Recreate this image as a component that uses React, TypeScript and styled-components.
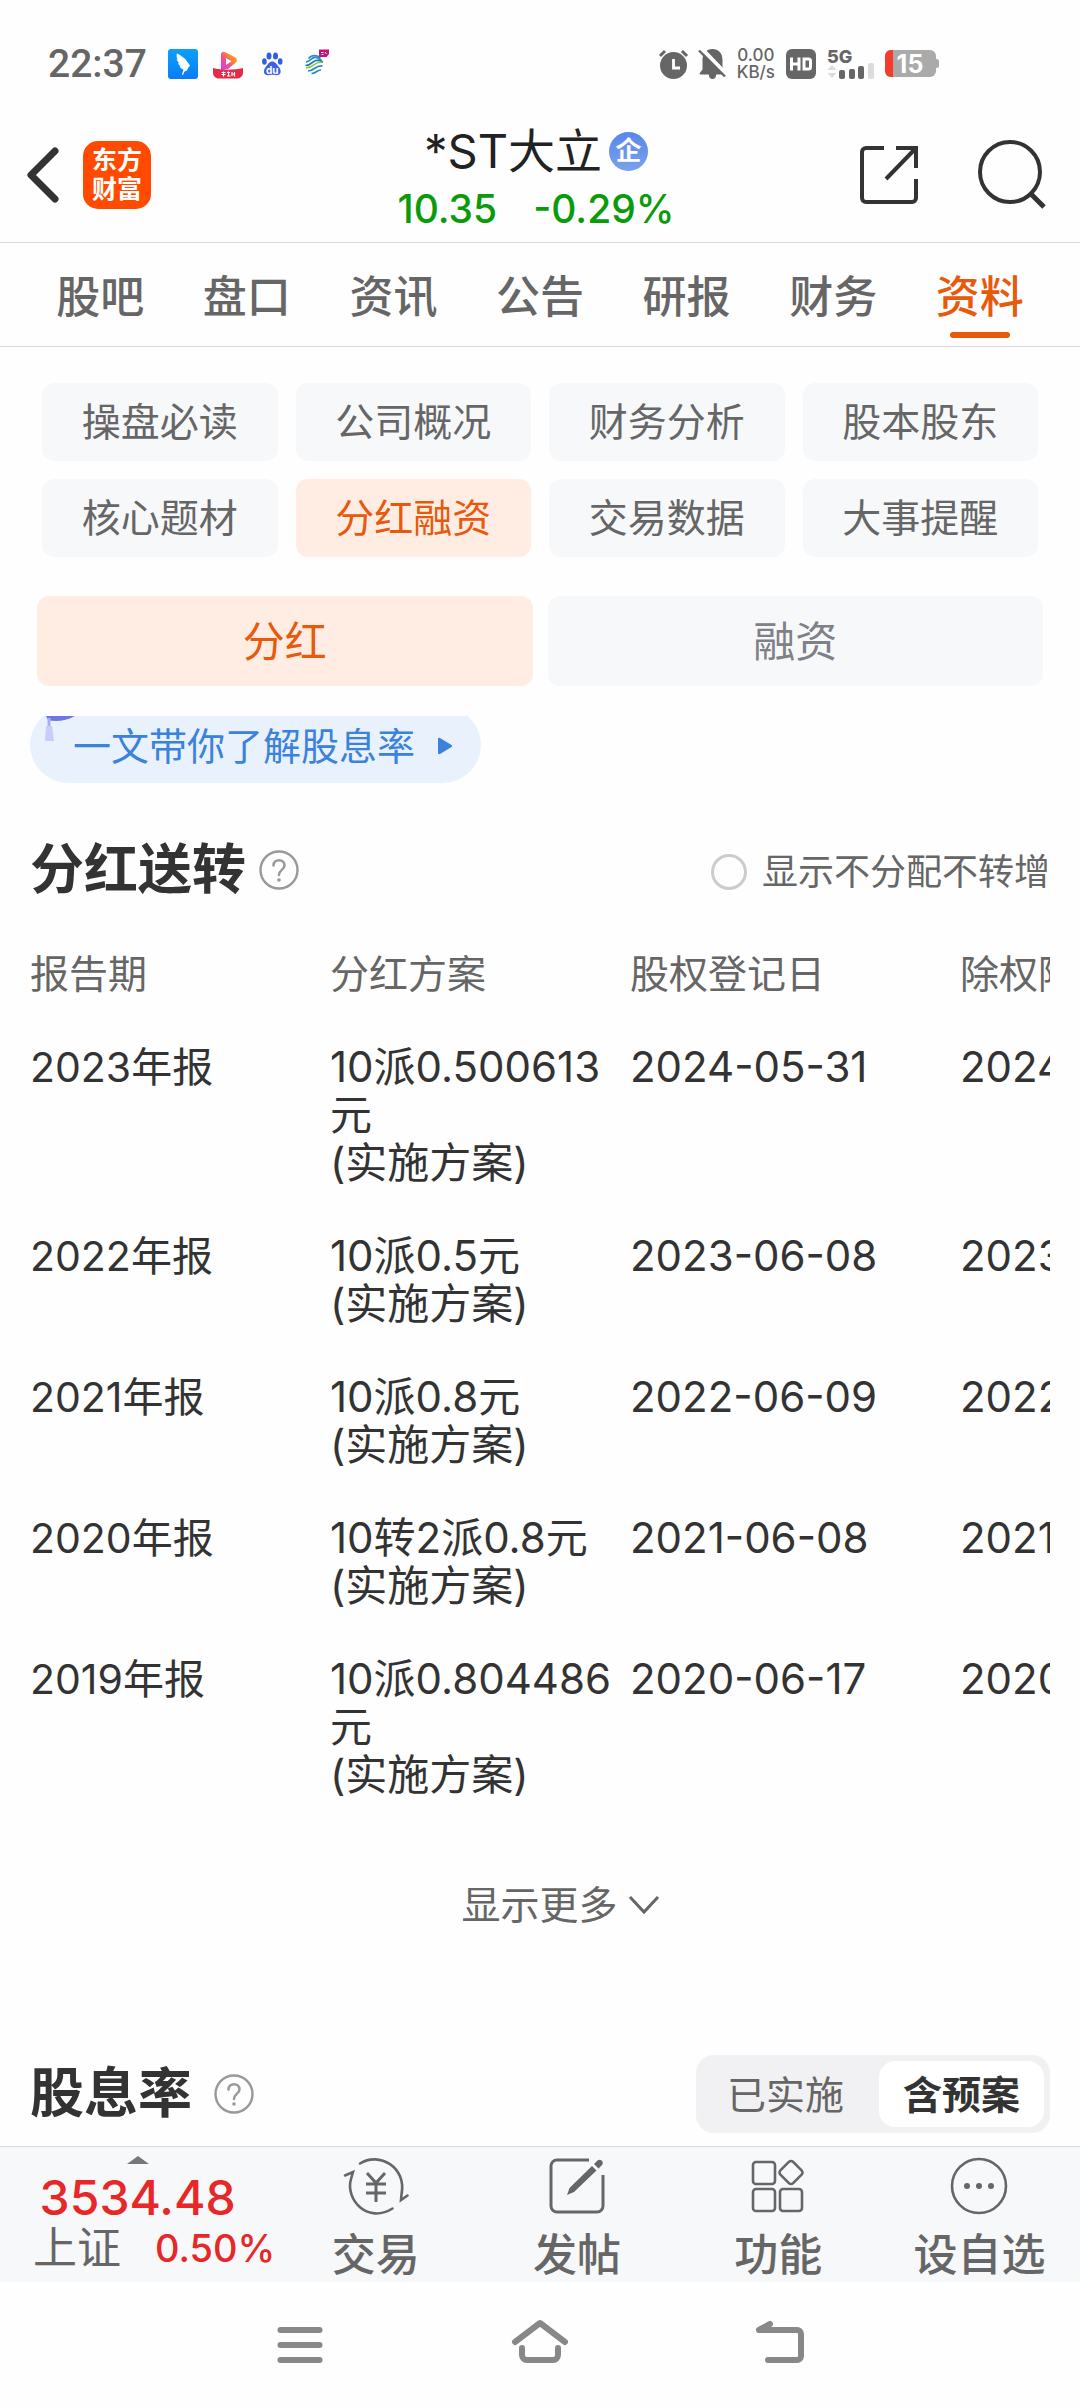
import React, { useState } from "react";
import styled, { createGlobalStyle } from "styled-components";

const color = {
  ink: "#333333",
  text: "#666666",
  muted: "#808087",
  line: "#d9d9db",
  orange: "#e8590c",
  orangeSoft: "#ffede4",
  chip: "#f7f8fa",
  green: "#0a9b0a",
  red: "#e62828",
  blue: "#3a82dc",
};

const GlobalStyle = createGlobalStyle`
  *, *::before, *::after { box-sizing: border-box; }
  body {
    margin: 0;
    background: #fefefe;
    color: ${color.ink};
    font-family: Inter, "Noto Sans CJK SC", sans-serif;
  }
  button {
    margin: 0;
    padding: 0;
    border: 0;
    background: none;
    color: inherit;
    font: inherit;
    cursor: pointer;
  }
  svg { display: block; flex: none; overflow: visible; }
`;

const Page = styled.div`
  display: flex;
  flex-direction: column;
  min-height: 100vh;
  overflow: hidden;
`;

/* ---------- status bar ---------- */

const StatusBar = styled.div`
  display: flex;
  align-items: center;
  justify-content: space-between;
  height: 108px;
  padding: 19px 141px 0 48px;
  color: ${color.text};
`;

const StatusGroup = styled.div<{ $gap: number }>`
  display: flex;
  align-items: center;
  gap: ${(p) => p.$gap}px;
`;

const Clock = styled.span`
  margin-right: 6px;
  font: 500 39px/48px Roboto, sans-serif;
`;

const Speed = styled.span`
  display: flex;
  flex-direction: column;
  align-items: center;
  font: 500 17px/17px Inter, sans-serif;
`;

/* ---------- stock header ---------- */

const Header = styled.header`
  display: grid;
  grid-template-columns: 1fr auto 1fr;
  align-items: center;
  height: 135px;
  padding: 0 34px 0 26px;
  border-bottom: 1px solid ${color.line};
`;

const HeaderSide = styled.div<{ $end?: boolean }>`
  display: flex;
  align-items: center;
  justify-content: ${(p) => (p.$end ? "flex-end" : "flex-start")};
  gap: ${(p) => (p.$end ? 60 : 24)}px;
`;

const Logo = styled.a`
  display: flex;
  flex-direction: column;
  justify-content: center;
  width: 68px;
  height: 68px;
  border-radius: 15px;
  background: #ff4a00;
  color: #fff;
  font-size: 25px;
  font-weight: 700;
  line-height: 29px;
  text-align: center;
  text-decoration: none;
`;

const Stock = styled.div`
  display: flex;
  flex-direction: column;
  align-items: center;
  padding-top: 8px;
`;

const StockName = styled.h1`
  display: flex;
  align-items: center;
  gap: 7px;
  margin: 0;
  color: #222;
  font-size: 47px;
  font-weight: 400;
  line-height: 60px;
`;

const Badge = styled.span`
  width: 39px;
  height: 39px;
  border-radius: 50%;
  background: linear-gradient(#5a86ea, #78a2ee);
  color: #fff;
  font-size: 26px;
  font-weight: 700;
  line-height: 38px;
  text-align: center;
`;

const Price = styled.div`
  display: flex;
  gap: 36px;
  color: ${color.green};
  font-size: 39px;
  font-weight: 500;
  line-height: 56px;
`;

/* ---------- tabs ---------- */

const Tabs = styled.nav`
  display: flex;
  height: 104px;
  padding: 0 27px;
  border-bottom: 1px solid ${color.line};
`;

const Tab = styled.button<{ $on: boolean }>`
  position: relative;
  flex: 1;
  padding-top: 4px;
  color: ${(p) => (p.$on ? color.orange : color.text)};
  font-size: 44px;
  font-weight: 500;
  line-height: 60px;

  &::after {
    content: "";
    display: ${(p) => (p.$on ? "block" : "none")};
    position: absolute;
    bottom: 8px;
    left: 50%;
    width: 60px;
    height: 6px;
    margin-left: -30px;
    border-radius: 3px;
    background: ${color.orange};
  }
`;

const Chips = styled.div`
  display: grid;
  grid-template-columns: repeat(4, 1fr);
  gap: 18px;
  padding: 36px 42px 39px;
`;

const Chip = styled.button<{ $on: boolean }>`
  height: 78px;
  padding-bottom: 6px;
  border-radius: 12px;
  background: ${(p) => (p.$on ? color.orangeSoft : color.chip)};
  color: ${(p) => (p.$on ? color.orange : color.text)};
  font-size: 39px;
`;

const Segments = styled.div`
  display: grid;
  grid-template-columns: 1fr 1fr;
  gap: 15px;
  padding: 0 37px;
`;

const Segment = styled.button<{ $on: boolean }>`
  height: 90px;
  padding-bottom: 6px;
  border-radius: 12px;
  background: ${(p) => (p.$on ? color.orangeSoft : color.chip)};
  color: ${(p) => (p.$on ? color.orange : color.muted)};
  font-size: 42px;
`;

/* ---------- content ---------- */

const Content = styled.main`
  flex: 1;
  padding: 30px 30px 13px;
`;

const PromoClip = styled.div`
  display: flex;
  align-items: flex-end;
  height: 67px;
  overflow: hidden;
`;

const Promo = styled.a`
  position: relative;
  display: flex;
  align-items: center;
  gap: 22px;
  height: 76px;
  padding: 2px 28px 0 43px;
  border-radius: 38px;
  background: #e9f2fc;
  color: ${color.blue};
  font-size: 38px;
  line-height: 48px;
  text-decoration: none;
`;

const Tassel = styled.svg`
  position: absolute;
  top: 9px;
  left: 14px;
`;

const SectionHead = styled.div<{ $top: number; $height: number }>`
  display: flex;
  align-items: center;
  justify-content: space-between;
  height: ${(p) => p.$height}px;
  margin-top: ${(p) => p.$top}px;
`;

const Heading = styled.div<{ $gap: number }>`
  display: flex;
  align-items: center;
  gap: ${(p) => p.$gap}px;

  h2 {
    margin: 0;
    font-size: 54px;
    font-weight: 700;
    line-height: 60px;
  }
`;

const RadioLabel = styled.label`
  display: flex;
  align-items: center;
  gap: 15px;
  padding-top: 4px;
  color: ${color.text};
  font-size: 36px;
  line-height: 48px;
`;

const Radio = styled.input`
  appearance: none;
  width: 36px;
  height: 36px;
  margin: 0;
  border: 3px solid #cccccc;
  border-radius: 50%;
  &:checked { border: 10px solid ${color.orange}; }
`;

const TableScroll = styled.div`
  margin-top: 50px;
  overflow-x: auto;
  scrollbar-width: none;
`;

const Table = styled.table`
  width: 1230px;
  table-layout: fixed;
  border-collapse: collapse;

  col:nth-child(-n + 2) { width: 300px; }
  col:nth-child(3) { width: 330px; }

  th, td {
    padding: 0 0 45px;
    text-align: left;
    vertical-align: top;
    line-height: 48px;
    font-weight: 400;
  }
  thead th { color: ${color.text}; font-size: 39px; }
  tbody th { font-size: 41px; }
  tbody td { font-size: 42px; }
`;

const Plan = styled.div`
  margin-right: 8px;
  word-break: break-all;
`;

const More = styled.button`
  display: flex;
  align-items: center;
  justify-content: center;
  gap: 11px;
  width: 100%;
  margin-top: 37px;
  padding-left: 40px;
  color: ${color.text};
  font-size: 39px;
  line-height: 48px;
`;

const Toggle = styled.div`
  display: grid;
  grid-template-columns: 1fr 165px;
  gap: 10px;
  width: 354px;
  height: 78px;
  padding: 6px;
  border-radius: 18px;
  background: #f1f1f3;
`;

const ToggleOption = styled.button<{ $on: boolean }>`
  padding-bottom: 4px;
  border-radius: 16px;
  background: ${(p) => (p.$on ? "#fff" : "transparent")};
  color: ${(p) => (p.$on ? color.ink : color.text)};
  font-size: 39px;
  font-weight: ${(p) => (p.$on ? 700 : 400)};
`;

/* ---------- bottom bars ---------- */

const ActionBar = styled.footer`
  display: grid;
  grid-template-columns: 275fr repeat(4, 201fr);
  height: 136px;
  border-top: 1px solid ${color.line};
  background: #f7f8fa;
`;

const Quote = styled.button`
  display: flex;
  flex-direction: column;
  align-items: center;
  padding-top: 9px;
`;

const IndexValue = styled.span`
  margin-top: 7px;
  color: ${color.red};
  font-size: 48px;
  font-weight: 500;
  line-height: 54px;
`;

const IndexRow = styled.span`
  display: flex;
  align-self: flex-end;
  align-items: center;
  gap: 34px;
  line-height: 46px;
`;

const IndexName = styled.span`
  color: ${color.text};
  font-size: 44px;
`;

const IndexChange = styled.span`
  color: ${color.red};
  font-size: 38px;
  font-weight: 500;
`;

const Action = styled.button`
  display: flex;
  flex-direction: column;
  align-items: center;
  gap: 16px;
  padding-top: 10px;
  color: ${color.text};
  font-size: 44px;
  font-weight: 500;
  line-height: 48px;
`;

const SystemNav = styled.nav`
  display: flex;
  justify-content: center;
  height: 126px;
`;

const SystemButton = styled.button`
  display: flex;
  align-items: center;
  justify-content: center;
  width: 240px;
`;

/* ---------- drawings ---------- */

const WingIcon = () => (
  <svg width="30" height="30" viewBox="0 0 30 30">
    <defs>
      <linearGradient id="wing" x2="0" y2="1">
        <stop stopColor="#0aa0fb" />
        <stop offset="1" stopColor="#0a7cf8" />
      </linearGradient>
    </defs>
    <rect width="30" height="30" rx="3" fill="url(#wing)" />
    <path
      d="M9 4.500c1 .2 6.500 3.500 9 6.500 1.500 2 2.500 3.500 4 5.500l-2 2.500-1 2.500-2.500 1-1.500 3.500-1-.5 1.500-5-1.500-.5c-1.500-1-2-2-2.500-3l1.500.3c-2-1.300-2.500-2-3-3.300l1.500.5C9.500 12.500 9 11.500 8.500 10l1.200.6C8.500 8.500 8.300 6.500 9 4.500z"
      fill="#fff"
    />
  </svg>
);

const VideoIcon = () => (
  <svg width="30" height="30" viewBox="0 0 30 30">
    <defs>
      <linearGradient id="play" x1="0" y1="1" x2="1" y2="0">
        <stop stopColor="#d936f5" />
        <stop offset="0.400" stopColor="#f0508c" />
        <stop offset="0.650" stopColor="#f98a2b" />
        <stop offset="1" stopColor="#fbb030" />
      </linearGradient>
    </defs>
    <path d="M8 5.500C8 3 10 2 12.500 3.200l9.500 5c2.500 1.500 2.500 4 .5 5.500L15 20l-7 1z" fill="url(#play)" />
    <path d="M13 9l5.500 3.200L13 16z" fill="#fff" />
    <path d="M0 19c9 2.300 21 2.300 30 0v4.500c0 3.500-2.500 6-6 6H6c-3.500 0-6-2.500-6-6z" fill="#e52a45" />
    <path d="M8.500 23.500h4M8.500 25.500h4M10.500 22.500v5M14 23.500h3M14 27h3.500M15.500 22.500v4M19 23v4M21.500 23v4.500M19 25h2.500" stroke="#fff" strokeWidth="1.200" />
  </svg>
);

const PawIcon = () => (
  <svg width="28" height="24" viewBox="-4 0 28 24" fill="#2f5fe0">
    <ellipse cx="7" cy="4" rx="2.500" ry="3.500" />
    <ellipse cx="13.500" cy="4" rx="2.500" ry="3.500" />
    <ellipse cx="2.400" cy="9.500" rx="2.300" ry="3.200" />
    <ellipse cx="18.200" cy="9.500" rx="2.300" ry="3.200" />
    <path d="M10.300 9.500c3 0 4 2.500 6 4.700 3 3 4 9-2 9-2 0-2.500-.4-4-.4s-2 .4-4 .4c-6 0-5-6-2-9 2-2.200 3-4.700 6-4.700z" fill="#3c62e4" />
    <text x="10.300" y="21.500" fontFamily="Inter, sans-serif" fontSize="10" fontWeight="700" fill="#fff" textAnchor="middle">du</text>
  </svg>
);

const CarrierIcon = () => (
  <svg width="30" height="30" viewBox="-4 0 30 30" fill="none">
    <path d="M14 0.500h10v4.500l-2.500 3H14z" fill="#c8107a" />
    <path d="M16 3.500h2.500M16.500 5.500h2M20 3l1.500 2" stroke="#fff" strokeWidth="0.900" />
    <g strokeWidth="1.700">
      <path d="M3.500 9.500c3.500-4 9-4 12 0M1 13c5-.5 5.500-5.500 10-4.500 3 .7 3.500 2.500 6 3" stroke="#2a8ac6" />
      <path d="M0.500 16.500c8 0 6.500-8.500 17.500-3.500" stroke="#1d79bd" />
      <path d="M1 19c8.500 0 8-7.500 17-5.500" stroke="#8fc63f" />
      <path d="M3 22c6.500 0 7-6 14.500-5M6.500 24.500c4.500 0 5-3.500 9.500-3.500" stroke="#2a8ac6" />
    </g>
  </svg>
);

const AlarmIcon = () => (
  <svg width="29" height="30" viewBox="0 0 29 30">
    <circle cx="14.500" cy="16.500" r="13.500" fill="#666" />
    <path d="M1 7l5-5M28 7l-5-5" stroke="#666" strokeWidth="3" />
    <path d="M14.500 10v9h6.500" stroke="#fff" strokeWidth="2.800" fill="none" />
  </svg>
);

const MutedBellIcon = () => (
  <svg width="27" height="30" viewBox="0 0 27 30">
    <path d="M1.500 25.500c-1 0-1.200-1-.5-1.700l2.500-3.300V11C3.500 4 7.500 0 13.500 0s10 4 10 11v9.500l2.500 3.300c.7.700.5 1.700-.5 1.700h-8.300c0 6-7.400 6-7.400 0z" fill="#666" />
    <path d="M2.500-.5l25 26" stroke="#fefefe" strokeWidth="4" />
    <path d="M0 1.500l26 26" stroke="#666" strokeWidth="2.400" />
  </svg>
);

const HdIcon = () => (
  <svg width="30" height="30" viewBox="0 0 30 30">
    <rect width="30" height="30" rx="6" fill="#666" />
    <path d="M5.500 8.500v13M13 8.500v13M5.500 15H13M18 10h4.500a2 2 0 0 1 2 2v6a2 2 0 0 1-2 2H18z" stroke="#fff" strokeWidth="3" fill="none" />
  </svg>
);

const SignalIcon = () => (
  <svg width="47" height="30" viewBox="0 0 47 30" fill="#666">
    <text x="0" y="14" fontFamily="Inter, sans-serif" fontSize="18" fontWeight="800">5G</text>
    <path d="M0.500 21l4.500-5 4.500 5zM0.500 24l4.500 5 4.500-5z" fill="#dcdcdc" />
    <rect x="12" y="21" width="6" height="9" rx="2" />
    <rect x="22" y="20" width="6" height="10" rx="2" />
    <rect x="31" y="17" width="6" height="13" rx="2" />
    <rect x="41" y="14" width="6" height="16" rx="2" fill="#dcdcdc" />
  </svg>
);

const BatteryIcon = () => (
  <svg width="54" height="27" viewBox="0 0 54 27">
    <rect width="51" height="27" rx="6" fill="#aaaaaa" />
    <path d="M6 0h2v27H6a6 6 0 0 1-6-6V6a6 6 0 0 1 6-6z" fill="#f63a2c" />
    <path d="M50 9h1.500a2.500 2.500 0 0 1 2.500 2.500v4a2.500 2.500 0 0 1-2.500 2.500H50z" fill="#aaaaaa" />
    <text x="25" y="22.500" fontFamily="Inter, sans-serif" fontSize="25" fontWeight="700" fill="#fff" textAnchor="middle">15</text>
  </svg>
);

const BackIcon = () => (
  <svg width="33" height="58" viewBox="0 0 33 58" fill="none" stroke="#333" strokeWidth="7" strokeLinecap="round" strokeLinejoin="round">
    <path d="M29 5L5 29l24 24" />
  </svg>
);

const ShareIcon = () => (
  <svg width="58" height="58" viewBox="0 0 58 58" fill="none" stroke="#333" strokeWidth="4">
    <path d="M24 2H6a4 4 0 0 0-4 4v46a4 4 0 0 0 4 4h46a4 4 0 0 0 4-4V33" />
    <path d="M36 2h20v20M56 2L26 33" />
  </svg>
);

const SearchIcon = () => (
  <svg width="68" height="70" viewBox="0 0 68 70" fill="none" stroke="#333" strokeWidth="4">
    <circle cx="32" cy="32" r="30" />
    <path d="M52 53l14 14" strokeWidth="5" />
  </svg>
);

const HelpIcon = () => (
  <svg width="40" height="40" viewBox="0 0 40 40" fill="none" stroke="#999" strokeWidth="2.400">
    <circle cx="20" cy="20" r="18.500" />
    <path d="M14.500 15.500c0-7 11-7 11 0 0 4-5.500 4.500-5.500 9.500" strokeWidth="2.500" strokeLinecap="round" />
    <circle cx="20" cy="30" r="1.800" fill="#999" stroke="none" />
  </svg>
);

const ChevronDown = () => (
  <svg width="30" height="20" viewBox="0 0 30 20" fill="none" stroke="#666" strokeWidth="3">
    <path d="M1 2l14 15L29 2" />
  </svg>
);

const TradeIcon = () => (
  <svg width="66" height="58" viewBox="0 0 66 58" fill="none" stroke="#666" strokeWidth="2.600" strokeLinecap="round">
    <path d="M17 6.500C36-5.500 64 10 58.500 37.500L58 43l6.500-4.500" />
    <path d="M2 18.500l8-3.500-2 7C2 43 25 67 49.500 51.500" />
    <path d="M24 16l9 10 9-10M23 27h20M23 36h20M33 27v18" strokeWidth="3" strokeLinecap="butt" />
  </svg>
);

const PostIcon = () => (
  <svg width="56" height="58" viewBox="0 0 56 58" fill="none" stroke="#666" strokeWidth="3">
    <path d="M40 3H8a6 6 0 0 0-6 6v40a6 6 0 0 0 6 6h40a6 6 0 0 0 6-6V18" />
    <path d="M18 38l2.500-7L43 9l4.500 4.500L25 35zM45 7l3.500-3.500c3-2.500 7 1.500 4.500 4.500L49.500 11.500z" fill="#666" stroke="none" />
  </svg>
);

const GridIcon = () => (
  <svg width="54" height="58" viewBox="0 0 54 58" fill="none" stroke="#666" strokeWidth="2.600">
    <rect x="2" y="5" width="22" height="22" rx="3" />
    <rect x="2" y="32" width="22" height="22" rx="3" />
    <rect x="29" y="32" width="22" height="22" rx="3" />
    <rect x="31" y="6.500" width="18" height="18" rx="3" transform="rotate(45 40 15.500)" />
  </svg>
);

const DotsIcon = () => (
  <svg width="58" height="58" viewBox="0 0 58 58" fill="#666">
    <circle cx="29" cy="29" r="27" fill="none" stroke="#666" strokeWidth="2.600" />
    <circle cx="17" cy="29" r="3" />
    <circle cx="29" cy="29" r="3" />
    <circle cx="41" cy="29" r="3" />
  </svg>
);

const MenuIcon = () => (
  <svg width="46" height="44" viewBox="0 0 46 44" stroke="#888" strokeWidth="6" strokeLinecap="round">
    <path d="M3.500 7h39M3.500 22h39M3.500 37h39" />
  </svg>
);

const HomeIcon = () => (
  <svg width="58" height="48" viewBox="0 0 58 48" fill="none" stroke="#888" strokeWidth="6" strokeLinecap="round" strokeLinejoin="round">
    <path d="M4 21L29 2l25 19M11 27v7a5 5 0 0 0 5 5h26a5 5 0 0 0 5-5v-7" />
  </svg>
);

const ReturnIcon = () => (
  <svg width="50" height="48" viewBox="0 0 50 48" fill="none" stroke="#888" strokeWidth="6" strokeLinecap="round" strokeLinejoin="round">
    <path d="M15 3L4 9h38a4 4 0 0 1 4 4v22a4 4 0 0 1-4 4H13" />
  </svg>
);

/* ---------- data ---------- */

const tabs = ["股吧", "盘口", "资讯", "公告", "研报", "财务", "资料"];
const chips = ["操盘必读", "公司概况", "财务分析", "股本股东", "核心题材", "分红融资", "交易数据", "大事提醒"];
const rows = [
  ["2023年报", "10派0.500613元", "2024-05-31", "2024-06-03"],
  ["2022年报", "10派0.5元", "2023-06-08", "2023-06-09"],
  ["2021年报", "10派0.8元", "2022-06-09", "2022-06-10"],
  ["2020年报", "10转2派0.8元", "2021-06-08", "2021-06-09"],
  ["2019年报", "10派0.804486元", "2020-06-17", "2020-06-18"],
];
const actions = [
  { label: "交易", icon: <TradeIcon /> },
  { label: "发帖", icon: <PostIcon /> },
  { label: "功能", icon: <GridIcon /> },
  { label: "设自选", icon: <DotsIcon /> },
];

export default function App() {
  const [tab, setTab] = useState("资料");
  const [chip, setChip] = useState("分红融资");
  const [segment, setSegment] = useState("分红");
  const [scope, setScope] = useState("含预案");

  return (
    <Page>
      <GlobalStyle />
      <StatusBar>
        <StatusGroup $gap={15}>
          <Clock>22:37</Clock>
          <WingIcon />
          <VideoIcon />
          <PawIcon />
          <CarrierIcon />
        </StatusGroup>
        <StatusGroup $gap={11}>
          <AlarmIcon />
          <MutedBellIcon />
          <Speed>
            <span>0.00</span>
            <span>KB/s</span>
          </Speed>
          <HdIcon />
          <SignalIcon />
          <BatteryIcon />
        </StatusGroup>
      </StatusBar>

      <Header>
        <HeaderSide>
          <button aria-label="返回"><BackIcon /></button>
          <Logo href="#">
            <span>东方</span>
            <span>财富</span>
          </Logo>
        </HeaderSide>
        <Stock>
          <StockName>
            *ST大立<Badge>企</Badge>
          </StockName>
          <Price>
            <span>10.35</span>
            <span>-0.29%</span>
          </Price>
        </Stock>
        <HeaderSide $end>
          <button aria-label="分享"><ShareIcon /></button>
          <button aria-label="搜索"><SearchIcon /></button>
        </HeaderSide>
      </Header>

      <Tabs>
        {tabs.map((t) => (
          <Tab key={t} $on={t === tab} onClick={() => setTab(t)}>{t}</Tab>
        ))}
      </Tabs>

      <Chips>
        {chips.map((c) => (
          <Chip key={c} $on={c === chip} onClick={() => setChip(c)}>{c}</Chip>
        ))}
      </Chips>

      <Segments>
        {["分红", "融资"].map((s) => (
          <Segment key={s} $on={s === segment} onClick={() => setSegment(s)}>{s}</Segment>
        ))}
      </Segments>

      <Content>
        <PromoClip>
          <Promo href="#">
            <Tassel width="34" height="26" viewBox="0 0 34 26">
              <path d="M2 0h29C22 5 12 6 4 4z" fill="#6d78e4" />
              <path d="M5 2v9" stroke="#a9aef0" strokeWidth="3" />
              <path d="M2 10h6l2 15H1z" fill="#c9cdf8" />
            </Tassel>
            一文带你了解股息率
            <svg width="16" height="18" viewBox="0 0 16 18">
              <path d="M1 2c0-1 1-1.500 2-1l11.500 7c.8.500.8 1.500 0 2L3 17c-1 .5-2 0-2-1z" fill={color.blue} />
            </svg>
          </Promo>
        </PromoClip>

        <SectionHead $top={57} $height={60}>
          <Heading $gap={13}>
            <h2>分红送转</h2>
            <button aria-label="分红送转说明"><HelpIcon /></button>
          </Heading>
          <RadioLabel>
            <Radio type="radio" name="undistributed" />
            显示不分配不转增
          </RadioLabel>
        </SectionHead>

        <TableScroll>
          <Table>
            <colgroup>
              <col />
              <col />
              <col />
              <col />
            </colgroup>
            <thead>
              <tr>
                <th scope="col">报告期</th>
                <th scope="col">分红方案</th>
                <th scope="col">股权登记日</th>
                <th scope="col">除权除息日</th>
              </tr>
            </thead>
            <tbody>
              {rows.map(([period, plan, record, exDate]) => (
                <tr key={period}>
                  <th scope="row">{period}</th>
                  <td>
                    <Plan>{plan}</Plan>
                    <div>(实施方案)</div>
                  </td>
                  <td>{record}</td>
                  <td>{exDate}</td>
                </tr>
              ))}
            </tbody>
          </Table>
        </TableScroll>

        <More>
          显示更多
          <ChevronDown />
        </More>

        <SectionHead $top={126} $height={78}>
          <Heading $gap={22}>
            <h2>股息率</h2>
            <button aria-label="股息率说明"><HelpIcon /></button>
          </Heading>
          <Toggle>
            {["已实施", "含预案"].map((s) => (
              <ToggleOption key={s} $on={s === scope} onClick={() => setScope(s)}>{s}</ToggleOption>
            ))}
          </Toggle>
        </SectionHead>
      </Content>

      <ActionBar>
        <Quote>
          <svg width="22" height="8" viewBox="0 0 22 8"><path d="M0 8L11 0l11 8z" fill="#777" /></svg>
          <IndexValue>3534.48</IndexValue>
          <IndexRow>
            <IndexName>上证</IndexName>
            <IndexChange>0.50%</IndexChange>
          </IndexRow>
        </Quote>
        {actions.map((a) => (
          <Action key={a.label}>
            {a.icon}
            {a.label}
          </Action>
        ))}
      </ActionBar>

      <SystemNav>
        <SystemButton aria-label="最近任务"><MenuIcon /></SystemButton>
        <SystemButton aria-label="主屏幕"><HomeIcon /></SystemButton>
        <SystemButton aria-label="返回上一级"><ReturnIcon /></SystemButton>
      </SystemNav>
    </Page>
  );
}
